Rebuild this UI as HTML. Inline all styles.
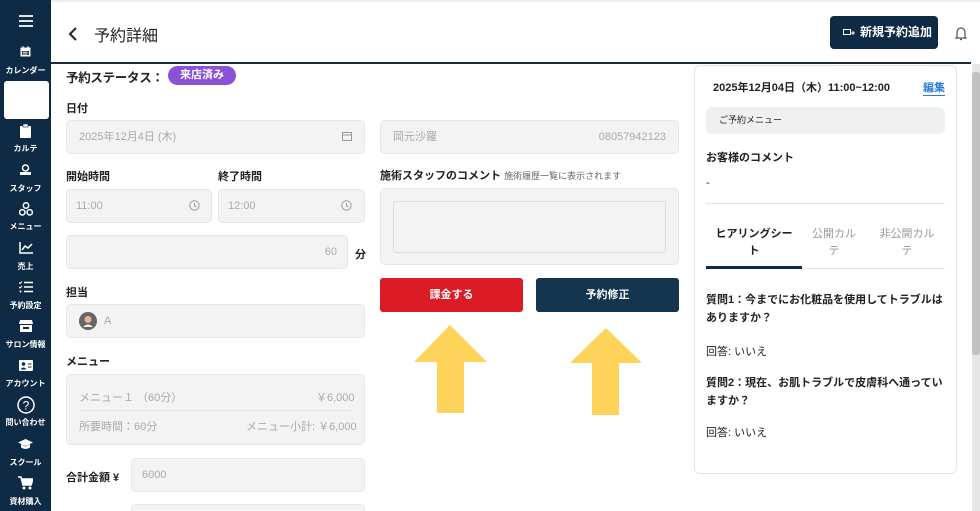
<!DOCTYPE html>
<html><head><meta charset="utf-8"><style>
*{box-sizing:border-box;margin:0;padding:0}
html,body{width:980px;height:511px;overflow:hidden}
body{background:#fff;font-family:"Liberation Sans","Noto Sans CJK JP",sans-serif;color:#222;position:relative}
#w{position:absolute;left:0;top:0;width:980px;height:511px;overflow:hidden}
.a{position:absolute}
.sb{left:0;top:0;width:51px;height:511px;background:#0e2a44}
.lbl{position:absolute;left:0;width:51px;text-align:center;color:#fff;font-size:8px;font-weight:bold;white-space:nowrap}
.inp{position:absolute;background:#f3f3f3;border:1px solid #e6e6e6;border-radius:5px;color:#aaa;font-size:11px}
.h{position:absolute;font-size:11px;font-weight:bold;color:#222}
</style></head><body><div id="w">
<div class="a sb">
<svg class="a" style="left:19px;top:15px" width="14" height="12"><path d="M0 1h14M0 6h14M0 11h14" stroke="#fff" stroke-width="1.8"/></svg>
<svg class="a" style="left:20px;top:46px" width="11" height="11"><rect x="0.5" y="1.5" width="10" height="9" fill="#fff"/><rect x="2" y="5" width="7" height="4" fill="#0e2a44"/><path d="M2.5 6.5h6M2.5 8h6M4 5v4M6 5v4" stroke="#fff" stroke-width=".6"/><path d="M3 0v2M8 0v2" stroke="#fff"/></svg>
<div class="lbl" style="top:65px">カレンダー</div>
<div class="a" style="left:4px;top:81px;width:45px;height:38px;background:#fff;border-radius:3px"></div>
<svg class="a" style="left:20px;top:124px" width="11" height="14"><rect x="0" y="2" width="11" height="12" rx="1" fill="#fff"/><rect x="3" y="0" width="5" height="3" fill="#fff" stroke="#0e2a44" stroke-width=".6"/></svg>
<div class="lbl" style="top:143px">カルテ</div>
<svg class="a" style="left:20px;top:164px" width="11" height="12"><circle cx="5.5" cy="4" r="3" fill="none" stroke="#fff" stroke-width="1.5"/><rect x="0" y="8" width="11" height="3" fill="#fff"/></svg>
<div class="lbl" style="top:183px">スタッフ</div>
<svg class="a" style="left:19px;top:202px" width="14" height="14"><g fill="none" stroke="#fff" stroke-width="1.5"><circle cx="7" cy="3.5" r="2.7"/><circle cx="3.3" cy="10.3" r="2.7"/><circle cx="10.7" cy="10.3" r="2.7"/></g></svg>
<div class="lbl" style="top:221px">メニュー</div>
<svg class="a" style="left:19px;top:242px" width="14" height="12"><path d="M1 0v11h13" stroke="#fff" stroke-width="1.5" fill="none"/><path d="M3 8l3-4 3 2 4-4" stroke="#fff" stroke-width="1.5" fill="none"/></svg>
<div class="lbl" style="top:261px">売上</div>
<svg class="a" style="left:19px;top:281px" width="14" height="12"><path d="M5 1.5h9M5 6h9M5 10.5h9" stroke="#fff" stroke-width="1.5"/><path d="M0 1.5l1 1 2-2M0 6l1 1 2-2" stroke="#fff" stroke-width="1" fill="none"/><circle cx="1.5" cy="10.5" r="1" fill="#fff"/></svg>
<div class="lbl" style="top:300px">予約設定</div>
<svg class="a" style="left:19px;top:320px" width="14" height="12"><path d="M1 0h12l1 4H0z" fill="#fff"/><rect x="1" y="5" width="12" height="7" fill="#fff"/><rect x="4" y="7" width="6" height="2" fill="#0e2a44"/></svg>
<div class="lbl" style="top:339px">サロン情報</div>
<svg class="a" style="left:19px;top:360px" width="14" height="11"><rect width="14" height="11" rx="1" fill="#fff"/><circle cx="4.5" cy="4" r="1.8" fill="#0e2a44"/><path d="M1.5 9.5q3-4 6 0z" fill="#0e2a44"/><path d="M9 4h3.5M9 7h3.5" stroke="#0e2a44"/></svg>
<div class="lbl" style="top:378px">アカウント</div>
<svg class="a" style="left:17px;top:396px" width="18" height="18"><circle cx="9" cy="9" r="8" fill="none" stroke="#fff" stroke-width="1.5"/><text x="9" y="13.5" text-anchor="middle" font-size="12" fill="#fff" font-family="Liberation Sans">?</text></svg>
<div class="lbl" style="top:417px">問い合わせ</div>
<svg class="a" style="left:18px;top:439px" width="15" height="11"><path d="M0 3.5L7.5 0 15 3.5 7.5 7z" fill="#fff"/><path d="M3 5v3.5q4.5 3 9 0V5L7.5 7.5z" fill="#fff"/></svg>
<div class="lbl" style="top:457px">スクール</div>
<svg class="a" style="left:18px;top:476px" width="15" height="14"><path d="M0 1h3l2 8h8l2-6H4" fill="none" stroke="#fff" stroke-width="1.6"/><path d="M4 3h11l-2 6H5z" fill="#fff"/><circle cx="6" cy="12" r="1.5" fill="#fff"/><circle cx="12" cy="12" r="1.5" fill="#fff"/></svg>
<div class="lbl" style="top:496px">資材購入</div>
</div>
<div class="a" style="left:51px;top:0;width:929px;height:2px;background:#eee"></div>
<div class="a" style="left:51px;top:62px;width:920px;height:2px;background:#1a2b3c"></div>
<svg class="a" style="left:68px;top:27px" width="10" height="14"><path d="M8 1L2 7l6 6" fill="none" stroke="#222" stroke-width="2"/></svg>
<div class="a" style="left:94px;top:22px;font-size:16px;color:#222">予約詳細</div>
<div class="a" style="left:830px;top:16px;width:108px;height:33px;background:#0e2a44;border-radius:4px;color:#fff;font-size:12px;font-weight:bold;line-height:33px;padding-left:30px">新規予約追加</div>
<svg class="a" style="left:843px;top:28px" width="12" height="9"><path d="M.5 1.5h7v5h-7zM8 5h4M10 3v4" fill="none" stroke="#fff" stroke-width="1"/></svg>
<svg class="a" style="left:955px;top:26px" width="12" height="15"><path d="M2 11V6a4 4 0 018 0v5l1 1H1zM5 13.5h2" fill="none" stroke="#555" stroke-width="1.2"/></svg>
<div class="a" style="left:66px;top:67px;font-size:12.5px;font-weight:bold;letter-spacing:-0.3px">予約ステータス：</div>
<div class="a" style="left:168px;top:66px;width:68px;height:19px;background:#8b52d6;border-radius:10px;color:#fff;font-size:11px;font-weight:bold;text-align:center;line-height:19px">来店済み</div>
<div class="h" style="left:66px;top:100px">日付</div>
<div class="inp" style="left:66px;top:120px;width:299px;height:34px;line-height:32px;padding-left:12px">2025年12月4日 (木)</div>
<svg class="a" style="left:342px;top:131px" width="10" height="10"><rect x=".5" y="1.5" width="9" height="8" fill="none" stroke="#999"/><path d="M.5 4h9" stroke="#999"/></svg>
<div class="h" style="left:66px;top:168px">開始時間</div>
<div class="h" style="left:218px;top:168px">終了時間</div>
<div class="inp" style="left:66px;top:189px;width:146px;height:34px;line-height:32px;padding-left:9px">11:00</div>
<div class="inp" style="left:218px;top:189px;width:147px;height:34px;line-height:32px;padding-left:9px">12:00</div>
<svg class="a" style="left:189px;top:200px" width="11" height="11"><circle cx="5.5" cy="5.5" r="4.7" fill="none" stroke="#999"/><path d="M5.5 3v3l2 1" fill="none" stroke="#999"/></svg>
<svg class="a" style="left:341px;top:200px" width="11" height="11"><circle cx="5.5" cy="5.5" r="4.7" fill="none" stroke="#999"/><path d="M5.5 3v3l2 1" fill="none" stroke="#999"/></svg>
<div class="inp" style="left:66px;top:235px;width:282px;height:34px;line-height:32px;text-align:right;padding-right:10px">60</div>
<div class="a" style="left:355px;top:246px;font-size:11px;font-weight:bold">分</div>
<div class="h" style="left:66px;top:284px">担当</div>
<div class="inp" style="left:66px;top:304px;width:299px;height:34px;line-height:32px;padding-left:37px">A</div>
<svg class="a" style="left:79px;top:312px" width="18" height="18"><circle cx="9" cy="9" r="9" fill="#666"/><circle cx="9" cy="7.5" r="3.5" fill="#e8b0a0"/><path d="M4 15q5-5 10 0" fill="#eee"/></svg>
<div class="h" style="left:66px;top:353px">メニュー</div>
<div class="inp" style="left:66px;top:374px;width:299px;height:71px"></div>
<div class="a" style="left:79px;top:389px;font-size:11px;color:#aaa">メニュー１ （60分）</div>
<div class="a" style="left:316px;top:389px;font-size:11px;color:#aaa">￥6,000</div>
<div class="a" style="left:79px;top:410px;width:274px;height:1px;background:#e4e4e4"></div>
<div class="a" style="left:79px;top:418px;font-size:11px;color:#aaa">所要時間：60分</div>
<div class="a" style="left:246px;top:418px;font-size:11px;color:#aaa">メニュー小計: ￥6,000</div>
<div class="h" style="left:66px;top:469px">合計金額 ¥</div>
<div class="inp" style="left:131px;top:458px;width:234px;height:34px;line-height:32px;padding-left:10px">6000</div>
<div class="a" style="left:131px;top:504px;width:234px;height:7px;background:#f3f3f3;border:1px solid #e6e6e6;border-bottom:none;border-radius:5px 5px 0 0"></div>
<div class="inp" style="left:380px;top:120px;width:299px;height:34px;line-height:32px;padding:0 12px">岡元沙羅<span style="float:right">08057942123</span></div>
<div class="a" style="left:380px;top:167px;font-size:11px;font-weight:bold">施術スタッフのコメント <span style="font-weight:normal;font-size:9px;color:#666">施術履歴一覧に表示されます</span></div>
<div class="inp" style="left:380px;top:188px;width:299px;height:77px"></div>
<div class="a" style="left:393px;top:201px;width:273px;height:52px;border:1px solid #ddd;border-radius:3px;background:#f3f3f3"></div>
<div class="a" style="left:380px;top:278px;width:143px;height:34px;background:#dc1c24;border-radius:3px;color:#fff;font-size:11px;font-weight:bold;text-align:center;line-height:34px">課金する</div>
<div class="a" style="left:536px;top:278px;width:143px;height:34px;background:#15344d;border-radius:3px;color:#fff;font-size:11px;font-weight:bold;text-align:center;line-height:34px">予約修正</div>
<svg class="a" style="left:0;top:0" width="980" height="511"><path d="M450 325L487 362H464V413H437V362H414Z" fill="#fdd35a"/><path d="M606 328L642 363H619V415H592V363H570Z" fill="#fdd35a"/></svg>
<div class="a" style="left:694px;top:65px;width:263px;height:409px;border:1px solid #e4e4e4;border-radius:6px;background:#fff"></div>
<div class="a" style="left:713px;top:79px;font-size:11px;font-weight:bold">2025年12月04日（木）11:00~12:00</div>
<div class="a" style="left:923px;top:79px;font-size:11px;font-weight:bold;color:#2a7ad9;border-bottom:1px solid #2a7ad9">編集</div>
<div class="a" style="left:706px;top:107px;width:239px;height:27px;background:#f0f0f0;border-radius:6px;font-size:9px;line-height:27px;padding-left:13px">ご予約メニュー</div>
<div class="a" style="left:706px;top:149px;font-size:11px;font-weight:bold">お客様のコメント</div>
<div class="a" style="left:706px;top:177px;font-size:11px">-</div>
<div class="a" style="left:706px;top:203px;width:239px;height:1px;background:#e6e6e6"></div>
<div class="a" style="left:714px;top:226px;width:80px;text-align:center;font-size:11px;font-weight:bold;line-height:17px">ヒアリングシート</div>
<div class="a" style="left:810px;top:226px;width:48px;text-align:center;font-size:11px;color:#999;line-height:17px">公開カルテ</div>
<div class="a" style="left:876px;top:226px;width:62px;text-align:center;font-size:11px;color:#999;line-height:17px">非公開カルテ</div>
<div class="a" style="left:706px;top:268px;width:239px;height:1px;background:#e6e6e6"></div>
<div class="a" style="left:706px;top:266px;width:96px;height:3px;background:#0e2a44"></div>
<div class="a" style="left:706px;top:291px;width:240px;font-size:11px;font-weight:bold;line-height:18px">質問1：今までにお化粧品を使用してトラブルはありますか？</div>
<div class="a" style="left:706px;top:343px;font-size:11px">回答: いいえ</div>
<div class="a" style="left:706px;top:374px;width:240px;font-size:11px;font-weight:bold;line-height:18px">質問2：現在、お肌トラブルで皮膚科へ通っていますか？</div>
<div class="a" style="left:706px;top:424px;font-size:11px">回答: いいえ</div>
<div class="a" style="left:972px;top:64px;width:8px;height:447px;background:#e6e6e6"></div>
<div class="a" style="left:972px;top:72px;width:8px;height:283px;background:#c1c1c1;border-radius:3px"></div>
</div></body></html>
